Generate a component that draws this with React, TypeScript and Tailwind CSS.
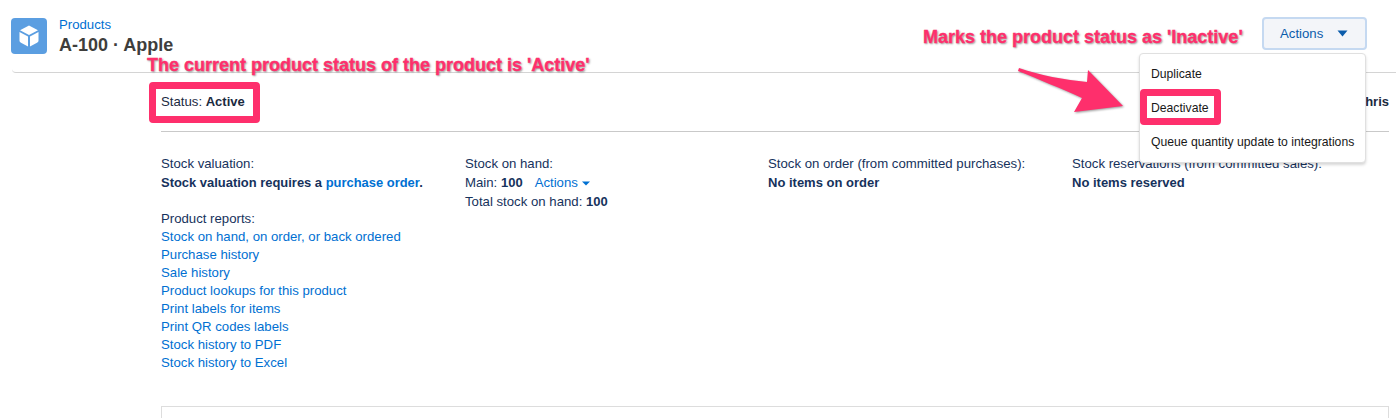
const reportLinks = [
  "Stock on hand, on order, or back ordered",
  "Purchase history",
  "Sale history",
  "Product lookups for this product",
  "Print labels for items",
  "Print QR codes labels",
  "Stock history to PDF",
  "Stock history to Excel",
];

function CubeIcon() {
  return (
    <svg width="20" height="22" viewBox="0 0 20 22" fill="#fff">
      <path d="M10 0.5 19 5.2 10 10 1 5.2Z" />
      <path d="M0.5 7 9 11.5V21.5L2 17.8C1 17.3 0.5 16.5 0.5 15.6Z" />
      <path d="M19.5 7 11 11.5V21.5L18 17.8C19 17.3 19.5 16.5 19.5 15.6Z" />
    </svg>
  );
}

function Callout({ className, children }: { className: string; children: string }) {
  return (
    <div
      className={`absolute whitespace-nowrap text-[18px] leading-[20px] font-bold text-[#fe2f6c] [-webkit-text-stroke:0.3px_#fe2f6c] [text-shadow:1px_1px_2px_rgba(0,0,0,0.45)] ${className}`}
    >
      {children}
    </div>
  );
}

export default function App() {
  return (
    <div className="relative h-[418px] w-[1396px] overflow-hidden bg-white font-['Liberation_Sans',Arial,sans-serif] text-[13.2px] leading-[18px] text-[#16325c]">
      <header className="ml-3 flex h-[73px] items-start justify-between rounded-bl border-b border-[#d4d4d4] pr-[29px]">
        <div className="flex items-start pt-[18px]">
          <div className="-ml-px flex h-9 w-9 items-center justify-center rounded-[4px] bg-[#5b9ee1]">
            <CubeIcon />
          </div>
          <div className="ml-3 -mt-[2px]">
            <a className="block text-[13.2px] leading-[18px] text-[#0070d2]">Products</a>
            <h1 className="text-[18px] leading-[22px] font-bold text-[#3e3e3c]">A-100 · Apple</h1>
          </div>
        </div>
        <button className="mt-[17px] flex h-[33px] w-[105px] items-center justify-between rounded border-2 border-[#c5d9f1] bg-[#f3f5f9] pr-[17px] pl-[16px] text-[#0b5cab]">
          <span>Actions</span>
          <svg width="11" height="7" viewBox="0 0 11 7" fill="#0b5cab">
            <path d="M0.5 0.5H10.5L5.5 6.5Z" />
          </svg>
        </button>
      </header>

      <div className="mr-[7px] ml-[161px] flex h-[59px] items-center justify-between border-b border-[#c9c9c9] text-[#1b2a3f]">
        <div>
          Status: <span className="text-[13px] font-bold">Active</span>
        </div>
        <div className="text-[13px] font-bold">Chris</div>
      </div>

      <div className="mt-[23px] ml-[161px] grid grid-cols-[304px_303px_304px_304px]">
        <div>
          <div>Stock valuation:</div>
          <div className="mt-px text-[12.95px] font-bold">
            Stock valuation requires a <a className="text-[#0070d2]">purchase order</a>.
          </div>
          <div className="mt-[18px]">Product reports:</div>
          {reportLinks.map((label) => (
            <a key={label} className="block text-[#0070d2]">
              {label}
            </a>
          ))}
        </div>
        <div>
          <div>Stock on hand:</div>
          <div className="mt-px flex items-center">
            Main:&nbsp;<span className="text-[13px] font-bold">100</span>
            <a className="ml-[12px] text-[#0070d2]">Actions</a>
            <svg className="ml-[4px] mt-px" width="8" height="5" viewBox="0 0 8 5" fill="#0070d2">
              <path d="M0 0.5H8L4 4.5Z" />
            </svg>
          </div>
          <div className="mt-px">
            Total stock on hand: <span className="text-[13px] font-bold">100</span>
          </div>
        </div>
        <div>
          <div>Stock on order (from committed purchases):</div>
          <div className="mt-px text-[13px] font-bold">No items on order</div>
        </div>
        <div>
          <div>Stock reservations (from committed sales):</div>
          <div className="mt-px text-[13px] font-bold">No items reserved</div>
        </div>
      </div>

      <div className="mt-[34px] mr-[7px] ml-[161px] h-10 border border-[#dddddd]" />

      {/* dropdown menu */}
      <div className="absolute top-[53px] left-[1139px] z-10 w-[227px] rounded border border-[#e0e0e0] bg-white py-[3px] pl-[11px] text-[12.2px] text-[#181818] shadow-[0_2px_3px_rgba(0,0,0,0.16)]">
        <div className="flex h-[34px] items-center">Duplicate</div>
        <div className="flex h-[34px] items-center">Deactivate</div>
        <div className="flex h-[34px] items-center whitespace-nowrap">Queue quantity update to integrations</div>
      </div>

      {/* annotations */}
      <Callout className="top-[55px] left-[147px]">The current product status of the product is 'Active'</Callout>
      <Callout className="top-[27px] left-[923px]">Marks the product status as 'Inactive'</Callout>
      <div className="absolute top-[82px] left-[149px] z-20 h-[41px] w-[111px] rounded-[4px] border-[7px] border-[#fe2f6c]" />
      <div className="absolute top-[89px] left-[1140px] z-20 h-[36px] w-[81px] rounded-[4px] border-[7px] border-[#fe2f6c]" />
      <svg className="absolute top-[64px] left-[1014px] z-20 drop-shadow-[1px_1px_1px_rgba(0,0,0,0.4)]" width="112" height="52" viewBox="0 0 112 52" fill="#fe2f6c">
        <path d="M5 4C24 11 52 16 73 18L74 6 109 42 60 48 68 34C48 25 24 15 4 7Z" />
      </svg>
    </div>
  );
}
